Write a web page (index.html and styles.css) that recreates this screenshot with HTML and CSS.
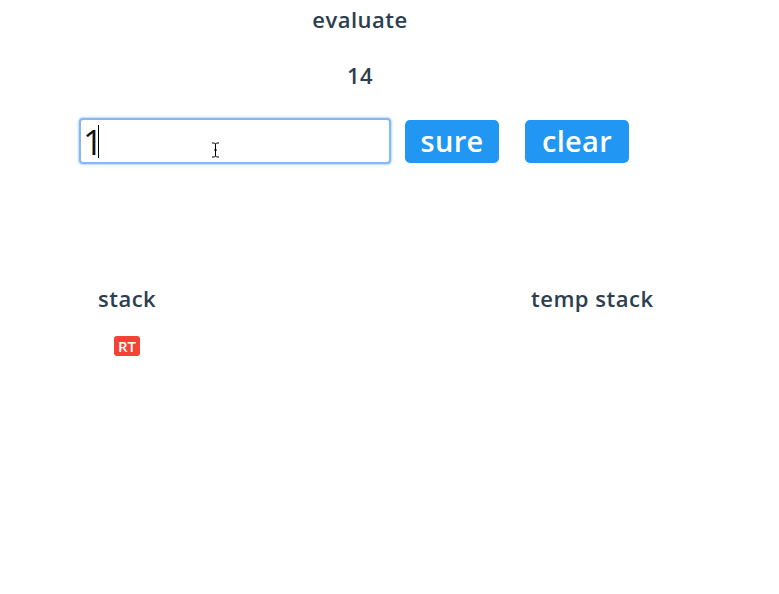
FILE: index.html
```html
<!DOCTYPE html>
<html>
<head>
<meta charset="utf-8">
<link rel="stylesheet" href="styles.css">
</head>
<body>
<div class="app">
  <h2 class="title">evaluate</h2>
  <div class="result">14</div>
  <div class="controls">
    <div class="field">
      <input class="expr" type="text" value="1">
      <span class="caret"></span>
      <svg class="ibeam" width="9" height="16" viewBox="0 0 9 16"><path d="M1 1h2.5l1 1 1-1H8M1 15h2.5l1-1 1 1H8M4.5 2v12M3 8h3" fill="none" stroke="#000" stroke-width="1"/></svg>
    </div>
    <button class="btn btn-sure">sure</button>
    <button class="btn btn-clear">clear</button>
  </div>
  <div class="stacks">
    <div class="stack stack-main">
      <h3 class="stack-title">stack</h3>
      <span class="badge">RT</span>
    </div>
    <div class="stack stack-temp">
      <h3 class="stack-title">temp stack</h3>
    </div>
  </div>
</div>
</body>
</html>
```
FILE: styles.css
```css
html, body {
  margin: 0;
  padding: 0;
  background: #fff;
}
.app {
  width: 720px;
  font-family: "Open Sans", Lato, sans-serif;
  color: #2c3e50;
  -webkit-font-smoothing: antialiased;
}
.title {
  margin: 0;
  padding-top: 6px;
  height: 26px;
  line-height: 26px;
  font-size: 22px;
  font-weight: 600;
  letter-spacing: 0.5px;
  text-align: center;
}
.result {
  margin-top: 30px;
  height: 26px;
  line-height: 26px;
  font-size: 22px;
  font-weight: 600;
  letter-spacing: 0.5px;
  text-align: center;
}
.controls {
  display: flex;
  align-items: center;
  margin-top: 30px;
  padding-left: 79px;
}
.field {
  position: relative;
  width: 312px;
  height: 46px;
}
.expr {
  box-sizing: border-box;
  width: 312px;
  height: 46px;
  margin: 0;
  padding: 0 0 0 2px;
  border: 2px solid #86b8f6;
  border-radius: 4px;
  box-shadow: 0 0 2px 1px #bcd8fb;
  outline: none;
  font-family: "Open Sans", sans-serif;
  font-size: 35px;
  color: #111;
  background: #fff;
}
.caret {
  position: absolute;
  left: 19px;
  top: 7px;
  width: 1px;
  height: 33px;
  background: #000;
}
.ibeam {
  position: absolute;
  left: 132px;
  top: 24px;
}
.btn {
  box-sizing: border-box;
  height: 43px;
  margin: 0;
  padding: 0;
  border: none;
  border-radius: 5px;
  background: #2196f3;
  color: #fff;
  font-family: "Open Sans", sans-serif;
  font-size: 29px;
  font-weight: 600;
  letter-spacing: 0.3px;
  line-height: 40px;
}
.btn-sure {
  width: 94px;
  margin-left: 14px;
}
.btn-clear {
  width: 104px;
  margin-left: 26px;
}
.stacks {
  display: flex;
  margin-top: 121px;
}
.stack {
  display: flex;
  flex-direction: column;
}
.stack-main {
  width: 126px;
  padding-left: 98px;
  align-items: flex-start;
}
.stack-temp {
  margin-left: 307px;
}
.stack-title {
  margin: 0;
  height: 26px;
  line-height: 26px;
  font-size: 22px;
  font-weight: 600;
  letter-spacing: 0.5px;
}
.badge {
  margin-top: 25px;
  margin-left: 16px;
  display: inline-block;
  padding: 0 4px;
  height: 20px;
  line-height: 20px;
  border-radius: 3px;
  background: #f44336;
  color: #fff;
  font-family: "Open Sans", sans-serif;
  font-size: 15px;
  font-weight: 600;
}
```
